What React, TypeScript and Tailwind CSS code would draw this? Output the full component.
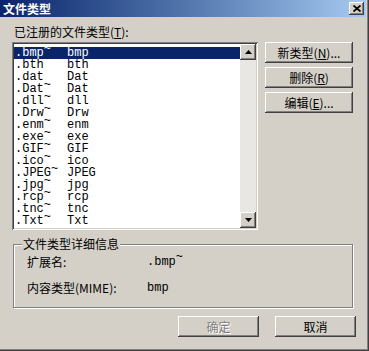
import React from "react";

const raised =
  "shadow-[inset_-1px_-1px_#404040,inset_1px_1px_#ffffff,inset_-2px_-2px_#808080,inset_2px_2px_#d4d0c8]";
const sunken =
  "shadow-[inset_1px_1px_#808080,inset_-1px_-1px_#ffffff,inset_2px_2px_#404040,inset_-2px_-2px_#d4d0c8]";

const rows: [string, string, boolean][] = [
  [".bmp", "bmp", true],
  [".bth", "bth", false],
  [".dat", "Dat", false],
  [".Dat", "Dat", true],
  [".dll", "dll", true],
  [".Drw", "Drw", true],
  [".enm", "enm", true],
  [".exe", "exe", true],
  [".GIF", "GIF", true],
  [".ico", "ico", true],
  [".JPEG", "JPEG", true],
  [".jpg", "jpg", true],
  [".rcp", "rcp", true],
  [".tnc", "tnc", true],
  [".Txt", "Txt", true],
];

function Btn({ children, disabled }: { children: React.ReactNode; disabled?: boolean }) {
  return (
    <div
      className={`h-[21px] flex items-center justify-center leading-[14px] bg-[#d4d0c8] ${raised} ${
        disabled ? "text-[#808080] [text-shadow:1px_1px_#ffffff]" : "text-black"
      }`}
    >
      {children}
    </div>
  );
}

export default function App() {
  return (
    <div className="w-[369px] h-[351px] bg-[#d4d0c8] shadow-[inset_-1px_-1px_#404040,inset_-2px_-2px_#808080] flex flex-col font-['Noto_Sans_CJK_SC',sans-serif] text-[12px] text-black overflow-hidden">
      {/* title bar */}
      <div className="h-[17px] w-[366px] shrink-0 flex items-center justify-between bg-gradient-to-r from-[#0a246a] to-[#a6caf0] pl-[3px] pr-[2px]">
        <span className="font-bold text-white leading-[17px] text-[12px]">文件类型</span>
        <div className={`w-[15px] h-[13px] bg-[#d4d0c8] flex items-center justify-center ${raised}`}>
          <svg width="8" height="7" viewBox="0 0 8 7">
            <path d="M0.5 0.5 L7.5 6.5 M7.5 0.5 L0.5 6.5" stroke="#000" strokeWidth="1.8" />
          </svg>
        </div>
      </div>

      {/* label */}
      <div className="mt-[8px] ml-[14px] h-[13px] leading-[13px]">
        已注册的文件类型(<span className="underline">T</span>):
      </div>

      {/* list + buttons */}
      <div className="mt-[4px] ml-[12px] flex items-start">
        <div className={`w-[246px] h-[188px] bg-white p-[2px] flex ${sunken}`}>
          <div className="flex-1 pt-[3px] font-['Liberation_Mono',monospace] text-[12px]">
            {rows.map(([a, b, t], i) => (
              <div
                key={i}
                className={`h-[12px] leading-[12px] flex pl-[1px] ${
                  i === 0 ? "bg-[#0a246a] text-white" : "text-black"
                }`}
              >
                <span className="w-[52px] whitespace-pre">
                  {a}
                  {t && (
                    <span className={`relative -top-[4px] ${i === 0 ? "text-white" : "text-black"}`}>~</span>
                  )}
                </span>
                <span>{b}</span>
              </div>
            ))}
          </div>
          <div className="w-[16px] flex flex-col bg-[#e9e7e3]">
            <div className={`h-[16px] bg-[#d4d0c8] flex items-center justify-center ${raised}`}>
              <svg width="7" height="4" viewBox="0 0 7 4">
                <polygon points="3.5,0 7,4 0,4" fill="#000" />
              </svg>
            </div>
            <div className="flex-1" />
            <div className={`h-[16px] bg-[#d4d0c8] flex items-center justify-center ${raised}`}>
              <svg width="7" height="4" viewBox="0 0 7 4">
                <polygon points="0,0 7,0 3.5,4" fill="#000" />
              </svg>
            </div>
          </div>
        </div>

        <div className="ml-[7px] w-[88px] flex flex-col gap-[4px]">
          <Btn>
            新类型(<span className="underline">N</span>)...
          </Btn>
          <Btn>
            删除(<span className="underline">R</span>)
          </Btn>
          <Btn>
            编辑(<span className="underline">E</span>)...
          </Btn>
        </div>
      </div>

      {/* group box */}
      <div className="mt-[14px] ml-[13px] w-[340px] h-[64px] relative border border-[#808080] shadow-[inset_1px_1px_#ffffff,1px_1px_#ffffff]">
        <div className="absolute left-[8px] -top-[8px] px-[1px] bg-[#d4d0c8] leading-[14px]">
          文件类型详细信息
        </div>
        <div className="pt-[10px] pl-[13px] flex flex-col gap-[12px]">
          <div className="flex h-[14px] leading-[14px]">
            <span className="w-[120px]">扩展名:</span>
            <span className="font-['Liberation_Mono',monospace]">
              .bmp<span className="relative -top-[5px]">~</span>
            </span>
          </div>
          <div className="flex h-[14px] leading-[14px]">
            <span className="w-[120px]">内容类型(MIME):</span>
            <span className="font-['Liberation_Mono',monospace]">bmp</span>
          </div>
        </div>
      </div>

      {/* bottom buttons */}
      <div className="mt-[8px] pl-[178px] flex gap-[16px]">
        <div className="w-[81px]">
          <Btn disabled>确定</Btn>
        </div>
        <div className="w-[81px]">
          <Btn>取消</Btn>
        </div>
      </div>
    </div>
  );
}
